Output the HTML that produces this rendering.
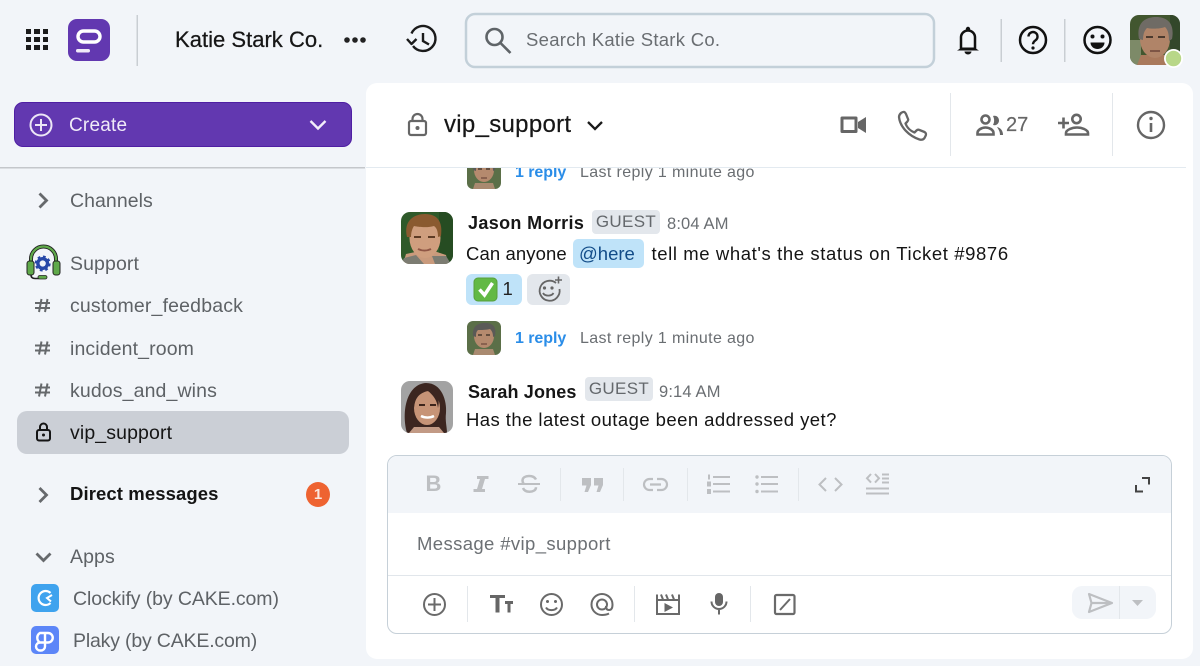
<!DOCTYPE html>
<html><head><meta charset="utf-8">
<style>
html,body{margin:0;padding:0;width:1200px;height:666px;overflow:hidden;background:#f2f5f9;font-family:"Liberation Sans",sans-serif;color:#111}
.t{position:absolute;white-space:nowrap;line-height:24px;height:24px}
.b{position:absolute}
svg{position:absolute;overflow:visible}
.s{color:#5e6266;font-size:19.5px}
.m{font-size:18.5px;color:#141414}
.g{color:#6b6f73}
.gs{fill:none;stroke:#bdbfc2;stroke-width:2}
.ds{fill:none;stroke:#6a6a6a;stroke-width:2}
.sep{position:absolute;width:1px;background:#e3e7eb}
</style></head><body>

<!-- top bar -->
<svg style="left:0;top:0" width="1200" height="80">
<g fill="#1c1c1c"><rect x="26" y="29" width="5" height="5"/><rect x="34" y="29" width="6" height="5"/><rect x="43" y="29" width="5" height="5"/><rect x="26" y="37" width="5" height="5"/><rect x="34" y="37" width="6" height="5"/><rect x="43" y="37" width="5" height="5"/><rect x="26" y="45" width="5" height="5"/><rect x="34" y="45" width="6" height="5"/><rect x="43" y="45" width="5" height="5"/></g>
<rect x="68" y="19" width="42" height="42" rx="9" fill="#6238b0"/>
<rect x="78" y="31" width="22" height="11" rx="5.5" fill="none" stroke="#fff" stroke-width="3.4"/>
<rect x="76" y="49" width="14" height="3.5" rx="1.7" fill="#f0eaf8"/>
<rect x="136.500" y="15" width="1.500" height="51" fill="#c9ced3"/>
<circle cx="347" cy="40" r="2.800" fill="#222"/><circle cx="355" cy="40" r="2.800" fill="#222"/><circle cx="363" cy="40" r="2.800" fill="#222"/>
<g fill="none" stroke="#1b1b1b" stroke-width="2.4"><path d="M411.500 33.500A12.500 12.500 0 1 1 413 46"/><path d="M407 39l4.500 5 5-5" stroke-linejoin="round"/><path d="M423 33v8l6 3.500"/></g>
<rect x="466" y="14" width="468" height="53" rx="9" fill="#f2f5f9" stroke="#c3d0d9" stroke-width="2.500"/>
<g fill="none" stroke="#5f6468" stroke-width="2.600"><circle cx="494.500" cy="37" r="8"/><path d="M500.500 43l10 10"/></g>
<!-- bell -->
<path d="M961 48.500V37.500a7 7 0 0 1 14 0V48.500" fill="none" stroke="#111" stroke-width="2.500"/>
<path d="M957 50.500c2-1 3-2 4-3h14c1 1 2 2 4 3z" fill="#111"/>
<circle cx="968" cy="29" r="2.200" fill="#111"/><path d="M964.500 51.500h7a3.500 3 0 0 1-7 0z" fill="#111"/>
<rect x="1000.500" y="19" width="1.500" height="43" fill="#c9ced3"/>
<circle cx="1033" cy="40" r="13" fill="none" stroke="#111" stroke-width="2.500"/>
<path d="M1028.500 36.500a4.500 4.500 0 1 1 7 3.800c-1.700 1.200-2.500 2-2.500 4" fill="none" stroke="#111" stroke-width="2.400"/><circle cx="1033" cy="48" r="1.600" fill="#111"/>
<rect x="1064" y="19" width="1.500" height="43" fill="#c9ced3"/>
<circle cx="1097.500" cy="40" r="13" fill="none" stroke="#111" stroke-width="2.500"/>
<circle cx="1092.500" cy="36.500" r="2" fill="#111"/><circle cx="1102.500" cy="36.500" r="2" fill="#111"/>
<path d="M1090.500 42.500h14a7 6.500 0 0 1-14 0z" fill="#111"/>
</svg>
<div class="t" style="left:175px;top:28px;font-size:22px;letter-spacing:.02px;color:#161616;-webkit-text-stroke:.25px #161616">Katie Stark Co.</div>
<div class="t g" style="left:526px;top:28px;font-size:18.5px;letter-spacing:.28px;color:#6a6e72">Search Katie Stark Co.</div>

<!-- top avatar -->
<svg style="left:1130px;top:15px" width="50" height="50" viewBox="0 0 50 50">
<defs><clipPath id="cA"><rect width="50" height="50" rx="9"/></clipPath>
<clipPath id="cJ"><rect width="52" height="52" rx="9"/></clipPath></defs>
<g clip-path="url(#cA)"><rect width="50" height="50" fill="#42562f"/><rect x="0" y="25" width="11" height="25" fill="#7d8a68"/><rect x="40" y="0" width="10" height="50" fill="#33472a"/>
<path d="M7 50l4-10h26l4 10z" fill="#a9795c"/><ellipse cx="25" cy="24" rx="15" ry="19" fill="#b08468"/>
<path d="M9 24C6 8 15 2 26 2s19 6 16 22l-3 2c0-7-1-11-4-14-5 2-14 2-18 1-3 3-4 7-4 12z" fill="#6f6b65"/>
<path d="M16 22h7M28 22h7" stroke="#4b3a2e" stroke-width="2"/><path d="M20 36h10" stroke="#7d5545" stroke-width="2"/></g>
<circle cx="43.500" cy="43.500" r="9.500" fill="#fff"/><circle cx="43.500" cy="43.500" r="7.700" fill="#b8d788"/>
</svg>

<!-- sidebar -->
<div class="b" style="left:14px;top:102px;width:336px;height:43px;background:#6238b0;border:1px solid #4f1fa3;border-radius:9px"></div>
<svg style="left:0;top:100px" width="360" height="70">
<circle cx="41" cy="25" r="10.500" fill="none" stroke="#ece6f6" stroke-width="2"/><path d="M35 25h12M41 19v12" stroke="#ece6f6" stroke-width="2"/>
<path d="M310.500 21l7.500 7.500 7.500-7.500" fill="none" stroke="#f3eefa" stroke-width="2.400"/>
<rect x="0" y="67" width="365" height="1.500" fill="#c4c7cb"/>
</svg>
<div class="t" style="left:69px;top:114px;font-size:19px;color:#f0ebf8;letter-spacing:.2px">Create</div>

<svg style="left:0;top:170px" width="360" height="496">
<g fill="none" stroke="#66696c" stroke-width="2.800"><path d="M39.500 23.500l7 7-7 7"/><path d="M39.500 318l7 7-7 7"/><path d="M36.500 383.500l7 7 7-7"/></g>
<!-- headset -->
<path d="M31 91v-2a12.500 12.500 0 0 1 25 0v2" fill="none" stroke="#222" stroke-width="4"/>
<path d="M31 91v-2a12.500 12.500 0 0 1 25 0v2" fill="none" stroke="#5fa94a" stroke-width="2.200"/>
<g stroke="#222" stroke-width="1">
<rect x="27" y="91" width="7" height="14" rx="2.500" fill="#5fa94a"/><rect x="53" y="91" width="7" height="14" rx="2.500" fill="#5fa94a"/>
<path d="M31 105c0 2 1 3.500 4 3.500h4" fill="none" stroke="#222" stroke-width="1.600"/>
<rect x="38" y="105.500" width="9" height="3.500" rx="1.700" fill="#5fa94a" stroke-width=".8"/>
</g>
<circle cx="42.700" cy="93.500" r="4.800" fill="#f2f5f9" stroke="#2849a8" stroke-width="3.400"/>
<circle cx="42.700" cy="93.500" r="7" fill="none" stroke="#2849a8" stroke-width="2" stroke-dasharray="2.800 2.700"/>
<!-- hashes -->
<g fill="none" stroke="#66696c" stroke-width="2">
<g transform="translate(0,135.500)"><path d="M35 -2.500h15M35 2.500h15M41.500 -6.500l-2.500 13M47.500 -6.500l-2.500 13"/></g>
<g transform="translate(0,178)"><path d="M35 -2.500h15M35 2.500h15M41.500 -6.500l-2.500 13M47.500 -6.500l-2.500 13"/></g>
<g transform="translate(0,220)"><path d="M35 -2.500h15M35 2.500h15M41.500 -6.500l-2.500 13M47.500 -6.500l-2.500 13"/></g>
</g>
</svg>
<div class="t s" style="left:70px;top:189px;letter-spacing:.05px">Channels</div>
<div class="t s" style="left:70px;top:252px;letter-spacing:.1px">Support</div>
<div class="t s" style="left:70px;top:294px;letter-spacing:.17px">customer_feedback</div>
<div class="t s" style="left:70px;top:337px;letter-spacing:.12px">incident_room</div>
<div class="t s" style="left:70px;top:379px;letter-spacing:.12px">kudos_and_wins</div>
<div class="b" style="left:17px;top:411px;width:332px;height:43px;background:#cbcfd6;border-radius:10px"></div>
<svg style="left:0;top:420px" width="60" height="30">
<rect x="37" y="10" width="13" height="10.500" rx="2" fill="none" stroke="#151515" stroke-width="2"/>
<path d="M40 10V7a3.500 3.500 0 0 1 7 0v3" fill="none" stroke="#151515" stroke-width="2"/><circle cx="43.500" cy="15" r="1.500" fill="#151515"/>
</svg>
<div class="t" style="left:70px;top:421px;font-size:19.5px;letter-spacing:.12px;color:#151515">vip_support</div>
<div class="t" style="left:70px;top:482px;font-size:18.5px;font-weight:bold;letter-spacing:.1px;color:#141414">Direct messages</div>
<div class="b" style="left:306px;top:482px;width:24px;height:25px;background:#ee6331;border-radius:50%"></div>
<div class="t" style="left:306px;top:482.500px;width:24px;text-align:center;font-size:15px;font-weight:bold;color:#fbe8df">1</div>
<div class="t s" style="left:70px;top:545px;letter-spacing:.1px">Apps</div>
<svg style="left:31px;top:584px" width="30" height="72">
<rect x="0" y="0" width="28" height="28" rx="5" fill="#3fa3ee"/>
<path d="M19.500 9A7 7 0 1 0 19.500 19" fill="none" stroke="#fff" stroke-width="2.200"/><path d="M21 11l-5 3 4 3.500" fill="none" stroke="#fff" stroke-width="2"/>
<rect x="0" y="42" width="28" height="28" rx="5" fill="#5c86f8"/>
<path d="M9 58.500a5.500 5.500 0 0 1 0-9.500h8a4.500 4.500 0 0 1 0 9.500h-8a4 4 0 0 0 0 8h1a4 4 0 0 0 4-4V50" fill="none" stroke="#fff" stroke-width="2.400"/>
</svg>
<div class="t s" style="left:73px;top:587px;letter-spacing:-.1px">Clockify (by CAKE.com)</div>
<div class="t s" style="left:73px;top:629px;letter-spacing:-.18px">Plaky (by CAKE.com)</div>

<!-- main panel -->
<div class="b" style="left:366px;top:83px;width:827px;height:576px;background:#fff;border-radius:11px"></div>
<div class="b" style="left:366px;top:167px;width:820px;height:1px;background:#e3eaf0"></div>
<div class="sep" style="left:950px;top:93px;height:63px"></div>
<div class="sep" style="left:1112px;top:93px;height:63px"></div>
<svg style="left:0;top:80px" width="1200" height="88">
<g fill="none" stroke="#666" stroke-width="2.200">
<rect x="409" y="41" width="17" height="14" rx="2"/><path d="M412.500 41v-2a5 5 0 0 1 10 0v2"/></g><circle cx="417.500" cy="48" r="2" fill="#666"/>
<path d="M588 42l7 7 7-7" fill="none" stroke="#1a1a1a" stroke-width="2.300"/>
<path d="M842 38h14v13.500h-14z" fill="none" stroke="#666" stroke-width="3" stroke-linejoin="round"/>
<path d="M858 42l8-5v16l-8-5z" fill="#666"/>
<path d="M901 33c3-2 4-1 5 1l2 5c.5 1 0 2-1 3l-1.500 1.500c1.500 4 5 7.500 9 9l2-2c1-1 2-1 3-.5l5 2c1.500 1 2 2 1 4l-1 2c-1 1.500-3 2-5 1.500C909 56 900 47 899 37c0-2 1-3 2-4z" fill="none" stroke="#666" stroke-width="2.300" stroke-linejoin="round"/>
<g fill="none" stroke="#666" stroke-width="2.600"><circle cx="985.500" cy="39.500" r="4"/><path d="M977.500 54.500v-1.500c0-3 4-5.500 8-5.500s8 2.500 8 5.500v1.500z"/></g>
<path d="M993 36c4-1 6 2 6 4.500s-2 5.500-6 4.500c1.500-3 1.500-6 0-9zM997 47c4 1 6 4 6 8h-3c0-3-1-5-3-8z" fill="#666"/>
<g fill="none" stroke="#666" stroke-width="2.600"><circle cx="1076.500" cy="39" r="4.200"/><path d="M1066 54.500v-1.500c0-3 6-5.500 11-5.500s11 2.500 11 5.500v1.500z"/><path d="M1058 43h11M1063.500 37.500v11"/></g>
<circle cx="1151" cy="45" r="13" fill="none" stroke="#666" stroke-width="2.400"/><circle cx="1151" cy="38.500" r="1.700" fill="#666"/><path d="M1151 43v9" stroke="#666" stroke-width="2.600"/>
</svg>
<div class="t" style="left:444px;top:113px;font-size:24px;letter-spacing:.3px;color:#161616;-webkit-text-stroke:.2px #161616">vip_support</div>
<div class="t" style="left:1006px;top:112.500px;font-size:20px;color:#666;letter-spacing:0;-webkit-text-stroke:.2px #666">27</div>

<!-- messages -->
<div class="b" style="left:366px;top:168px;width:820px;height:288px;overflow:hidden">
<svg style="left:101px;top:-13px" width="34" height="34" viewBox="0 0 34 34"><defs><clipPath id="cS"><rect width="34" height="34" rx="6"/></clipPath></defs><g clip-path="url(#cS)"><rect width="34" height="34" fill="#5b6f48"/><path d="M6 34l2-6h18l2 6z" fill="#a98a70"/><ellipse cx="17" cy="15" rx="10" ry="12" fill="#b58a6e"/><path d="M6 15C5 5 11 2 18 2s12 3 10 13l-2 1c0-4-1-6-3-8-4 1-9 1-12 1-2 2-2 4-2 7z" fill="#5b5a57"/><path d="M11 14h4M19 14h4" stroke="#4b3a2e" stroke-width="1.500"/><path d="M14 23h6" stroke="#7d5545" stroke-width="1.500"/></g></svg>
</div>
<div class="t" style="left:515px;top:161px;font-size:16px;font-weight:bold;color:#2a8de8;letter-spacing:-.05px;clip-path:inset(7px 0 0 0)">1 reply</div>
<div class="t" style="left:580px;top:161px;font-size:16px;color:#6a6e72;letter-spacing:.37px;clip-path:inset(7px 0 0 0)">Last reply 1 minute ago</div>

<svg style="left:401px;top:212px" width="52" height="52" viewBox="0 0 52 52"><g clip-path="url(#cJ)"><rect width="52" height="52" fill="#2f5a2a"/><rect x="38" y="0" width="14" height="52" fill="#264c22"/><path d="M2 52l3-10 14-3h14l12 4 2 9z" fill="#c99a7c"/><path d="M0 52l3-6 12-3 8 9zM50 52l-5-8-14 0 3 8z" fill="#7c7c72"/><ellipse cx="24" cy="26" rx="15.500" ry="20" fill="#cf9e7e"/><path d="M6 25C2 8 14 2 24 2c12 0 18 7 16 22l-3 1c0-5-1-9-4-11-6 2-16 1-20 0-2 3-3 7-3 11z" fill="#8a5a30"/><path d="M13 25h7M27 25h7" stroke="#5d3b25" stroke-width="2"/><path d="M17 37c4 2 9 2 13 0" stroke="#8f5645" stroke-width="2" fill="none"/></g></svg>
<div class="t" style="left:468px;top:210.500px;font-size:18px;font-weight:bold;color:#161616;letter-spacing:.35px">Jason Morris</div>
<div class="b" style="left:592px;top:210px;width:68px;height:24px;background:#e3e7ec;border-radius:4px"></div>
<div class="t" style="left:592px;top:210px;width:68px;text-align:center;font-size:17px;color:#64686c;letter-spacing:.35px">GUEST</div>
<div class="t" style="left:667px;top:211.500px;font-size:16.500px;color:#6a6e72;letter-spacing:.15px">8:04 AM</div>

<div class="t m" style="left:466px;top:242px;letter-spacing:.1px">Can anyone</div>
<div class="b" style="left:573px;top:239px;width:71px;height:29px;background:#bfe3f9;border-radius:5px"></div>
<div class="t" style="left:579px;top:242px;font-size:18.500px;color:#124c88">@here</div>
<div class="t m" style="left:651.500px;top:242px;letter-spacing:.6px">tell me what's the status on Ticket #9876</div>

<div class="b" style="left:466px;top:273.500px;width:56px;height:31px;background:#bfe3f9;border-radius:6px"></div>
<div class="b" style="left:527px;top:273.500px;width:43px;height:31px;background:#e3e7ec;border-radius:6px"></div>
<svg style="left:470px;top:275px" width="100" height="30">
<rect x="4" y="3" width="23" height="23" rx="4" fill="#62b945" stroke="#58a03c"/><path d="M9.500 14.500l5 5.500 8-12" fill="none" stroke="#fff" stroke-width="3.500"/>
<path d="M86 8a10 10 0 1 0 3.500 6" fill="none" stroke="#666" stroke-width="1.800"/>
<circle cx="74.500" cy="13" r="1.600" fill="#666"/><circle cx="82" cy="13" r="1.600" fill="#666"/><path d="M73 18c2 3.500 8.500 3.500 10.500 0" fill="none" stroke="#666" stroke-width="1.800"/>
<path d="M85 5h7M88.500 1.500v7" stroke="#666" stroke-width="1.600"/>
</svg>
<div class="t" style="left:502.500px;top:277px;font-size:18.500px;color:#222">1</div>

<svg style="left:467px;top:321px" width="34" height="34" viewBox="0 0 34 34"><g clip-path="url(#cS)"><rect width="34" height="34" fill="#5b6f48"/><path d="M6 34l2-6h18l2 6z" fill="#a98a70"/><ellipse cx="17" cy="15" rx="10" ry="12" fill="#b58a6e"/><path d="M6 15C5 5 11 2 18 2s12 3 10 13l-2 1c0-4-1-6-3-8-4 1-9 1-12 1-2 2-2 4-2 7z" fill="#5b5a57"/><path d="M11 14h4M19 14h4" stroke="#4b3a2e" stroke-width="1.500"/><path d="M14 23h6" stroke="#7d5545" stroke-width="1.500"/></g></svg>
<div class="t" style="left:515px;top:327px;font-size:16px;font-weight:bold;color:#2a8de8;letter-spacing:-.05px">1 reply</div>
<div class="t" style="left:580px;top:327px;font-size:16px;color:#6a6e72;letter-spacing:.37px">Last reply 1 minute ago</div>

<svg style="left:401px;top:381px" width="52" height="52" viewBox="0 0 52 52"><g clip-path="url(#cJ)"><rect width="52" height="52" fill="#a3a3a3"/><path d="M6 52C0 30 6 3 25 2c16 0 21 18 20 30-1 8 1 14 1 20z" fill="#3c2620"/><path d="M8 52l5-6h25l5 6z" fill="#c29a85"/><ellipse cx="26" cy="27" rx="13" ry="17" fill="#c79477"/><path d="M13 27c1-10 5-15 14-17 5 4 9 9 10 17 3-12-3-22-11-22S10 14 13 27z" fill="#3c2620"/><path d="M18 24h6M29 24h6" stroke="#3d251c" stroke-width="2"/><path d="M20 35c4 2 9 2 13 0" stroke="#fff" stroke-width="2.500" fill="none"/></g></svg>
<div class="t" style="left:468px;top:379.500px;font-size:18px;font-weight:bold;color:#161616;letter-spacing:.13px">Sarah Jones</div>
<div class="b" style="left:585px;top:377px;width:68px;height:24px;background:#e3e7ec;border-radius:4px"></div>
<div class="t" style="left:585px;top:377px;width:68px;text-align:center;font-size:17px;color:#64686c;letter-spacing:.35px">GUEST</div>
<div class="t" style="left:659px;top:379.500px;font-size:16.500px;color:#6a6e72;letter-spacing:.15px">9:14 AM</div>
<div class="t m" style="left:466px;top:408px;letter-spacing:.44px">Has the latest outage been addressed yet?</div>

<!-- composer -->
<div class="b" style="left:387px;top:455px;width:783px;height:177px;background:#fff;border:1.500px solid #c6d0d8;border-radius:10px;overflow:hidden">
<div style="position:absolute;left:0;top:0;width:100%;height:57px;background:#f2f5f9"></div>
<div style="position:absolute;left:0;top:119px;width:100%;height:1px;background:#e1e6eb"></div>
</div>
<div class="sep" style="left:560px;top:468px;height:33px"></div>
<div class="sep" style="left:623px;top:468px;height:33px"></div>
<div class="sep" style="left:687px;top:468px;height:33px"></div>
<div class="sep" style="left:798px;top:468px;height:33px"></div>
<div class="sep" style="left:467px;top:586px;height:36px"></div>
<div class="sep" style="left:634px;top:586px;height:36px"></div>
<div class="sep" style="left:750px;top:586px;height:36px"></div>
<div class="t" style="left:417px;top:532px;font-size:18.5px;letter-spacing:.38px;color:#6c7074">Message #vip_support</div>
<div class="b" style="left:1072px;top:586px;width:84px;height:33px;background:#f2f5f9;border-radius:10px"></div>
<div class="sep" style="left:1119px;top:586px;height:33px"></div>
<div class="t" style="left:425.500px;top:472px;font-size:22px;font-weight:bold;color:#bdbfc2">B</div>
<svg style="left:0;top:450px" width="1200" height="216">
<!-- format -->
<path d="M477 26h11.500v3h-3.500l-3 10h3v3h-11.500v-3h3.500l3-10h-3z" fill="#bdbfc2"/>
<path d="M518 34h22" style="fill:none;stroke:#bdbfc2;stroke-width:2"/>
<path d="M536 29.500c-1-2-3.500-3.500-7-3.500s-6.500 1.500-6.500 4.500c0 1 .3 2 1 3M523 38c1 2.500 3 3.700 6.500 3.700s6.500-1.500 6.500-4.500" style="fill:none;stroke:#bdbfc2;stroke-width:2.500"/>
<path d="M582 28h9v7l-3 7h-3.500l2-6.500H582zM594 28h9v7l-3 7h-3.500l2-6.500H594z" fill="#bdbfc2"/>
<path d="M653 29h-3.500a5.500 5.500 0 0 0 0 11h3.500M657 29h4.500a5.500 5.500 0 0 1 0 11h-4.500M650 34.500h11" style="fill:none;stroke:#bdbfc2;stroke-width:2.200"/>
<path d="M713 27h17M713 34h17M713 41.500h17M761 27h17M761 34h17M761 41.500h17" style="fill:none;stroke:#bdbfc2;stroke-width:2"/>
<g fill="#bdbfc2"><rect x="708" y="24.500" width="2" height="5"/><rect x="707" y="31.500" width="4" height="5"/><rect x="707" y="39" width="4" height="5"/><circle cx="757" cy="27" r="1.700"/><circle cx="757" cy="34" r="1.700"/><circle cx="757" cy="41.500" r="1.700"/></g>
<path d="M826 28l-6.500 6.500 6.500 6.500M835 28l6.500 6.500-6.500 6.500" style="fill:none;stroke:#bdbfc2;stroke-width:2"/>
<path d="M871 24l-4 4.300 4 4.300M875 24l4 4.300-4 4.300M882 24.500h7M882 28.500h7M882 32.500h7M866 38.500h23M866 43.500h23" style="fill:none;stroke:#bdbfc2;stroke-width:2"/>
<path d="M1142 28h7v6.500M1143 41.500h-7V35" fill="none" stroke="#444" stroke-width="2"/>
<!-- bottom -->
<circle cx="434.500" cy="154.500" r="10.500" class="ds"/><path d="M428 154.500h13M434.500 148v13" class="ds"/>
<path d="M490 145h15v3h-5.500v14.500h-4V148H490zM505 151h8v3h-2.500v8.500h-3V154H505z" fill="#666"/>
<circle cx="551.500" cy="154.500" r="10.500" class="ds"/><circle cx="547.500" cy="151.500" r="1.500" fill="#666"/><circle cx="555.500" cy="151.500" r="1.500" fill="#666"/><path d="M546 157.500c2 3.500 9 3.500 11 0" class="ds"/>
<path d="M609 163.500c-2 1-4.500 1.500-7 1.500a10.500 10.500 0 1 1 10.500-10.500c0 3-1 5.500-3.500 5.500s-3-2-3-4" class="ds"/><circle cx="602" cy="154.500" r="5" class="ds"/>
<path d="M657 150h22v14h-22zM657 150v-5.500M661 144.500l2 5M666 144.500l2 5M672 144.500l2 5M679 144.500v5.500" class="ds"/><path d="M664.500 153l8.500 4.500-8.500 4.500z" fill="#666"/>
<rect x="715" y="143" width="8" height="13" rx="4" fill="#666"/><path d="M711.500 151.500a7.500 7.500 0 0 0 15 0M719 159v5.500" class="ds"/>
<rect x="775" y="145" width="19.500" height="19" rx="1.500" style="fill:none;stroke:#6a6a6a;stroke-width:2.200"/><path d="M780 160l10-11" class="ds"/>
<path d="M1089 144l23 9-23 9 2.500-9z M1091.500 153h20" fill="none" stroke="#bdbfc2" stroke-width="2.200" stroke-linejoin="round"/>
<path d="M1132 150h11l-5.500 6z" fill="#bdbfc2"/>
</svg>
</body></html>
